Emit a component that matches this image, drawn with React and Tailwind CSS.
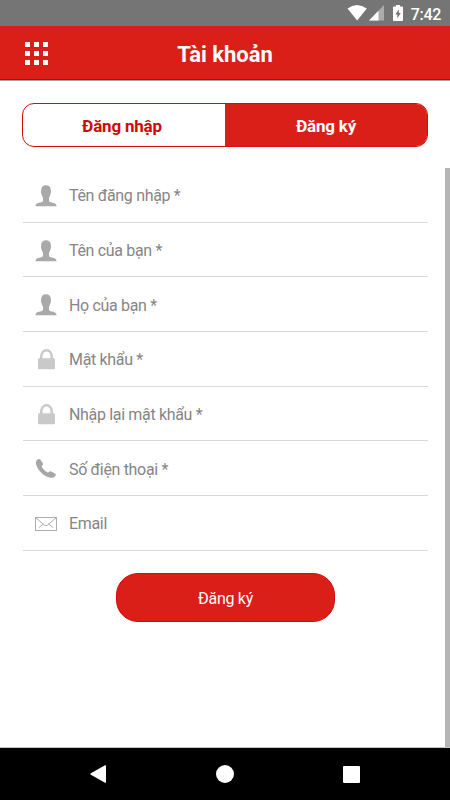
import React from "react";

function UserIcon() {
  return (
    <svg viewBox="0 0 22 22" className="w-[22px] h-[22px]" fill="#a9a9a9">
      <path d="M11 .2c3 0 4.800 1.900 4.800 4.800 0 .7.200 1 .2 1.900 0 1-.3 1.400-.5 2.200-.4 1.500-.8 2.800-1.500 3.700v3.300c0 1.300 5.200 1.500 6.700 3 .6.600.8 1.300.8 2.200H.5c0-.9.2-1.600.8-2.200C2.800 17.600 8 17.400 8 16.100v-3.300c-.7-.9-1.100-2.200-1.500-3.700C6.300 8.300 6 7.900 6 6.900 6 6 6.200 5.700 6.200 5 6.200 2.100 8 .2 11 .2z" />
    </svg>
  );
}

function LockIcon() {
  return (
    <svg viewBox="0 0 22 22" className="w-[22px] h-[22px]">
      <path d="M6.300 11V7a5.200 5.700 0 0 1 10.400 0V11" fill="none" stroke="#c9c9c9" strokeWidth="2.500" />
      <rect x="3" y="9.300" width="17" height="11" rx="1.200" fill="#c9c9c9" />
    </svg>
  );
}

function PhoneIcon() {
  return (
    <svg viewBox="0 0 22 22" className="w-[22px] h-[22px]" fill="#a6a6a6">
      <path d="M2.300 1.700C3.500.8 4.900.9 5.700 1.900l2.100 3.400c.5.900.2 1.500-.3 2-.6.600-.9 1.100-.5 1.900 1 1.900 3 3.800 5.200 5 .8.400 1.400.1 2-.4.600-.5 1.300-.8 2.100-.4l3.700 2.100c1 .6 1 1.800.1 2.800-1.200 1.500-3.300 1.900-5.400 1.300C8.600 17.900 3.100 12.700 1.200 6.700.6 4.800.9 2.800 2.300 1.700z" />
    </svg>
  );
}

function MailIcon() {
  return (
    <svg viewBox="0 0 22 22" className="w-[22px] h-[22px]" fill="none" stroke="#adadad">
      <rect x=".5" y="4.500" width="21" height="13" />
      <path d="M1 5l8.600 7.200q1.400 1 2.800 0L21 5M4 14.500l4.500-3.600M18 14.500l-4.500-3.600" />
    </svg>
  );
}

const fields = [
  { icon: UserIcon, label: "Tên đăng nhập *" },
  { icon: UserIcon, label: "Tên của bạn *" },
  { icon: UserIcon, label: "Họ của bạn *" },
  { icon: LockIcon, label: "Mật khẩu *" },
  { icon: LockIcon, label: "Nhập lại mật khẩu *" },
  { icon: PhoneIcon, label: "Số điện thoại *" },
  { icon: MailIcon, label: "Email" },
];

function StatusBar() {
  return (
    <div className="h-[26px] shrink-0 bg-[#757575] flex items-center justify-end pr-[9px] text-white">
      <svg viewBox="0 0 56 18" className="w-14 h-[18px]" fill="#fff">
        <path d="M.5 4.500Q10 -2.500 19.800 4.500L10.200 16.500z" />
        <path d="M37 1v15.500H22z" fillOpacity=".4" />
        <path d="M31.500 6.700v9.800H22z" />
        <path
          fillRule="evenodd"
          d="M49 1h4v1.500h2.200q.8 0 .8.800v12.900q0 .8-.8.800h-8.400q-.8 0-.8-.8V3.300q0-.8.800-.8H49zM51.800 5.200L48.300 10.500h2V14.300L53.800 8.900h-2z"
        />
      </svg>
      <span className="ml-2 pt-[3px] text-base leading-none font-medium tracking-[-0.3px]">7:42</span>
    </div>
  );
}

function Header() {
  return (
    <header className="h-[55px] shrink-0 grid grid-cols-[1fr_auto_1fr] items-center bg-[#da1e18] border-b border-[#a3a3a3] shadow-[inset_0_-1px_0_#d10000]">
      <div className="ml-[25px] grid grid-cols-3 gap-1 w-[23px]">
        {Array.from({ length: 9 }, (_, i) => (
          <span key={i} className="w-[5px] h-[5px] bg-white" />
        ))}
      </div>
      <h1 className="pt-0.5 text-[22px] font-bold text-white">Tài khoản</h1>
    </header>
  );
}

export default function App() {
  return (
    <div className="w-[450px] h-[800px] flex flex-col bg-white overflow-hidden font-[Roboto,sans-serif]">
      <StatusBar />
      <Header />

      {/* Login / register tabs */}
      <div className="mt-[22px] mx-[22px] h-11 shrink-0 grid grid-cols-2 border border-[#d20d0d] rounded-xl overflow-hidden text-[17px] tracking-[-0.2px] font-bold">
        <div className="flex items-center justify-center pt-[3px] pr-1 text-[#d20808]">Đăng nhập</div>
        <div className="flex items-center justify-center pt-[3px] bg-[#da1e18] text-white">Đăng ký</div>
      </div>

      <main className="mt-[21px] flex-1 min-h-0 flex border-b border-[#c4c4c4]">
        <div className="flex-1 pl-[23px] pr-[17px]">
          {fields.map(({ icon: Icon, label }) => (
            <div key={label} className="h-[54.700px] flex items-center border-b border-[#d9d9d9] pl-3 pt-0.5">
              <Icon />
              <span className="ml-3 pt-px text-base tracking-[-0.330px] text-[#858585]">{label}</span>
            </div>
          ))}
          <button className="block mx-auto mt-[22px] w-[219px] h-[49px] pt-[3px] rounded-[22px] bg-[#da1e18] border border-[#d30d0d] text-base tracking-[-0.300px] text-white">
            Đăng ký
          </button>
        </div>
        {/* Scrollbar */}
        <div className="w-[5px] bg-[#b5b5b5]" />
      </main>

      {/* Android navigation keys */}
      <nav className="h-[52px] shrink-0 bg-black flex items-center justify-between pl-[90px] pr-[90px]">
        <svg viewBox="0 0 16 18" className="w-4 h-[18px]" fill="#fff">
          <path d="M15 0.300q1-.5 1 .5v16.400q0 1-1 .5L.5 9.500q-.5-.5 0-1z" />
        </svg>
        <span className="w-[18px] h-[18px] rounded-full bg-white" />
        <span className="w-[17px] h-[17px] rounded-[1px] bg-white" />
      </nav>
    </div>
  );
}
